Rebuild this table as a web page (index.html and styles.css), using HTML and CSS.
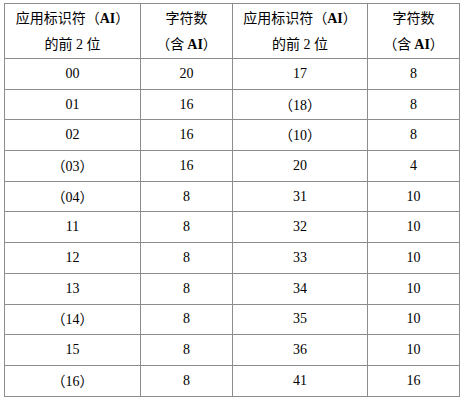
FILE: index.html
```html
<!DOCTYPE html>
<html lang="zh">
<head>
<meta charset="utf-8">
<link rel="stylesheet" href="styles.css">
</head>
<body>
<table class="ai-table">
  <colgroup>
    <col class="c1"><col class="c2"><col class="c3"><col class="c4">
  </colgroup>
  <tr class="head">
    <td><span class="cjk">应用标识符（</span><b>AI</b><span class="cjk">）</span><br><span class="cjk">的前</span> 2 <span class="cjk">位</span></td>
    <td><span class="cjk">字符数</span><br><span class="cjk">（含 </span><b>AI</b><span class="cjk">）</span></td>
    <td><span class="cjk">应用标识符（</span><b>AI</b><span class="cjk">）</span><br><span class="cjk">的前</span> 2 <span class="cjk">位</span></td>
    <td><span class="cjk">字符数</span><br><span class="cjk">（含 </span><b>AI</b><span class="cjk">）</span></td>
  </tr>
  <tr><td>00</td><td>20</td><td>17</td><td>8</td></tr>
  <tr><td>01</td><td>16</td><td><span class="cjk">（</span>18<span class="cjk">）</span></td><td>8</td></tr>
  <tr><td>02</td><td>16</td><td><span class="cjk">（</span>10<span class="cjk">）</span></td><td>8</td></tr>
  <tr><td><span class="cjk">（</span>03<span class="cjk">）</span></td><td>16</td><td>20</td><td>4</td></tr>
  <tr><td><span class="cjk">（</span>04<span class="cjk">）</span></td><td>8</td><td>31</td><td>10</td></tr>
  <tr><td>11</td><td>8</td><td>32</td><td>10</td></tr>
  <tr><td>12</td><td>8</td><td>33</td><td>10</td></tr>
  <tr><td>13</td><td>8</td><td>34</td><td>10</td></tr>
  <tr><td><span class="cjk">（</span>14<span class="cjk">）</span></td><td>8</td><td>35</td><td>10</td></tr>
  <tr><td>15</td><td>8</td><td>36</td><td>10</td></tr>
  <tr><td><span class="cjk">（</span>16<span class="cjk">）</span></td><td>8</td><td>41</td><td>16</td></tr>
</table>
</body>
</html>
```
FILE: styles.css
```css
html, body {
  margin: 0;
  padding: 0;
  background: #fff;
}
body {
  padding: 3px 0 0 4px;
  font-family: "Liberation Serif", "Noto Sans CJK SC", serif;
  font-size: 14px;
  color: #000;
}
.cjk {
  font-family: "Noto Sans CJK SC", sans-serif;
  font-weight: 400;
}
.ai-table b {
  font-weight: 700;
}
.ai-table {
  border-collapse: collapse;
  table-layout: fixed;
  width: 455px;
}
.c1 { width: 136px; }
.c2 { width: 92px; }
.c3 { width: 135px; }
.c4 { width: 92px; }
.ai-table td {
  border: 1px solid #8c8c8c;
  text-align: center;
  vertical-align: middle;
  padding: 0;
  height: 29.7px;
  line-height: 20px;
}
.ai-table tr.head td {
  height: 54px;
  line-height: 25px;
}
```
